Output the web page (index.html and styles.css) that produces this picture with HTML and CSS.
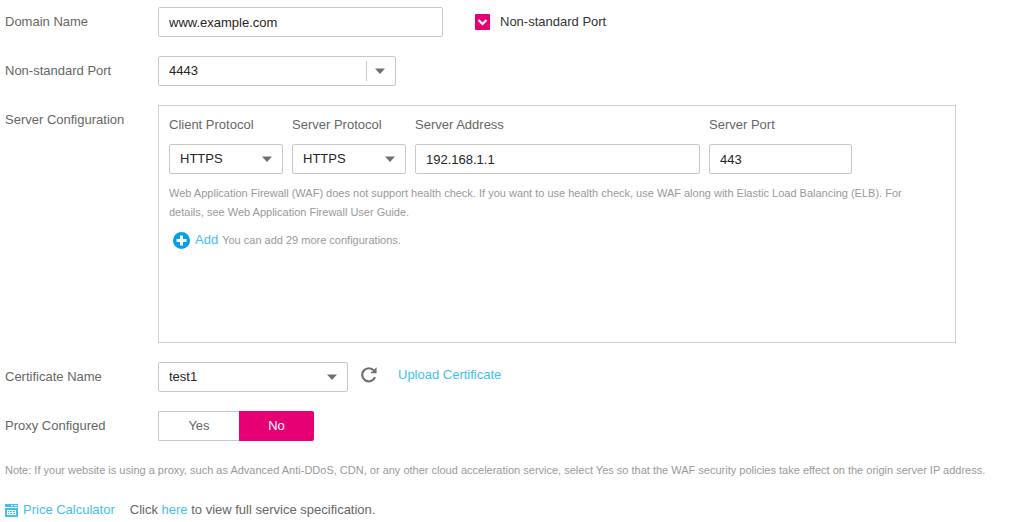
FILE: index.html
```html
<!DOCTYPE html>
<html lang="en">
<head>
<meta charset="utf-8">
<meta name="viewport" content="width=device-width, initial-scale=1">
<title>Domain Configuration</title>
<link rel="stylesheet" href="styles.css">
</head>
<body>
<form class="form">
  <div class="row">
    <label class="label" for="domain">Domain Name</label>
    <div class="content">
      <input class="control control-long" id="domain" type="text" value="www.example.com">
      <label class="check-label"><input class="checkbox" type="checkbox" checked>Non-standard Port</label>
    </div>
  </div>

  <div class="row">
    <label class="label" for="port">Non-standard Port</label>
    <div class="content">
      <span class="select select-port">
        <select class="control" id="port"><option>4443</option></select>
        <svg class="arrow" viewBox="0 0 10 6" aria-hidden="true"><path d="M0 0.5h10L5 6z"/></svg>
      </span>
    </div>
  </div>

  <div class="row">
    <span class="label">Server Configuration</span>
    <section class="panel">
      <div class="server">
        <div class="field">
          <label for="client-protocol">Client Protocol</label>
          <span class="select">
            <select class="control" id="client-protocol"><option>HTTPS</option></select>
            <svg class="arrow" viewBox="0 0 10 6" aria-hidden="true"><path d="M0 0.5h10L5 6z"/></svg>
          </span>
        </div>
        <div class="field">
          <label for="server-protocol">Server Protocol</label>
          <span class="select">
            <select class="control" id="server-protocol"><option>HTTPS</option></select>
            <svg class="arrow" viewBox="0 0 10 6" aria-hidden="true"><path d="M0 0.5h10L5 6z"/></svg>
          </span>
        </div>
        <div class="field">
          <label for="address">Server Address</label>
          <input class="control" id="address" type="text" value="192.168.1.1">
        </div>
        <div class="field">
          <label for="server-port">Server Port</label>
          <input class="control" id="server-port" type="text" value="443">
        </div>
      </div>
      <p class="hint">Web Application Firewall (WAF) does not support health check. If you want to use health check, use WAF along with Elastic Load Balancing (ELB). For details, see Web Application Firewall User Guide.</p>
      <div class="add-row">
        <button class="add" type="button">
          <svg class="add-icon" viewBox="0 0 17 17" aria-hidden="true"><circle cx="8.5" cy="8.5" r="8.5" fill="#049fe8"/><path d="M8.5 3.5v10M3.5 8.5h10" stroke="#fff" stroke-width="3"/></svg>
          Add
        </button>
        <span class="small">You can add 29 more configurations.</span>
      </div>
    </section>
  </div>

  <div class="row">
    <label class="label" for="certificate">Certificate Name</label>
    <div class="content">
      <span class="select select-cert">
        <select class="control" id="certificate"><option>test1</option></select>
        <svg class="arrow" viewBox="0 0 10 6" aria-hidden="true"><path d="M0 0.5h10L5 6z"/></svg>
      </span>
      <div class="cert-actions">
        <button class="refresh" type="button" aria-label="Refresh">
          <svg class="refresh-icon" viewBox="0 0 16 16" aria-hidden="true"><path d="M12.9 3.6A6.6 6.6 0 1 0 14 10.2" fill="none" stroke="#707070" stroke-width="2.2"/><path d="M15.6 0.3v6H10V4.8h1.6L13.7 2z" fill="#707070"/></svg>
        </button>
        <a class="link" href="#">Upload Certificate</a>
      </div>
    </div>
  </div>

  <div class="row">
    <span class="label" id="proxy-label">Proxy Configured</span>
    <div class="toggle" role="group" aria-labelledby="proxy-label">
      <button class="option" type="button" aria-pressed="false">Yes</button>
      <button class="option option-active" type="button" aria-pressed="true">No</button>
    </div>
  </div>

  <p class="small note">Note: If your website is using a proxy, such as Advanced Anti-DDoS, CDN, or any other cloud acceleration service, select Yes so that the WAF security policies take effect on the origin server IP address.</p>

  <footer class="footer">
    <a class="link calculator" href="#">
      <svg class="calc-icon" viewBox="0 0 13 13" aria-hidden="true"><path fill="#42c0f0" d="M0 0h13v13H0z"/><path fill="#fff" d="M6 1h2v1H6zM9 1h3v1H9zM0 3h13v1H0zM2 6h9v5H2z"/><path fill="#42c0f0" d="M3 7h1v1H3zM5 7h2v1H5zM8 7h2v1H8zM3 9h1v1H3zM5 9h2v1H5zM8 9h2v1H8z"/></svg>
      Price Calculator
    </a>
    <span>Click <a class="link" href="#">here</a> to view full service specification.</span>
  </footer>
</form>
</body>
</html>
```
FILE: styles.css
```css
* {
  box-sizing: border-box;
}

body {
  margin: 0;
  background: #fff;
  color: #666;
  font: 13px/20px "Liberation Sans", Arial, sans-serif;
}

button,
input,
select {
  font: inherit;
  color: inherit;
}

p {
  margin: 0;
}

.form {
  display: flex;
  flex-direction: column;
  gap: 19px;
  padding: 7px 0 0 5px;
}

.row {
  display: grid;
  grid-template-columns: 153px minmax(0, 798px);
}

.label {
  line-height: 30px;
}

.content {
  display: flex;
  align-items: center;
}

.control {
  width: 100%;
  height: 30px;
  margin: 0;
  padding: 0 10px;
  border: 1px solid #c8c8c8;
  border-radius: 2px;
  background: #fff;
  color: #252525;
  appearance: none;
}

.control-long {
  max-width: 285px;
}

.check-label {
  display: flex;
  align-items: center;
  gap: 10px;
  margin-left: 32px;
  color: #333;
}

.checkbox {
  width: 15px;
  height: 16px;
  margin: 0;
  border: 1px solid #c8c8c8;
  border-radius: 1px;
  appearance: none;
}

.checkbox:checked {
  border: 0;
  background: #e60073 url("data:image/svg+xml,%3Csvg xmlns='http://www.w3.org/2000/svg' viewBox='0 0 15 16'%3E%3Cpath d='M3.5 6l4 4 4-4' fill='none' stroke='white' stroke-width='2.2'/%3E%3C/svg%3E") center / 15px 16px;
}

.select {
  position: relative;
  display: block;
}

.select-port {
  width: 238px;
}

.select-port::after {
  content: "";
  position: absolute;
  top: 5px;
  right: 29px;
  width: 1px;
  height: 20px;
  background: #c8c8c8;
}

.select-cert {
  width: 190px;
}

.arrow {
  position: absolute;
  top: 12px;
  right: 11px;
  width: 10px;
  height: 6px;
  fill: #707070;
  pointer-events: none;
}

.panel {
  min-height: 238px;
  padding: 9px 10px;
  border: 1px solid #d0d0d0;
}

.server {
  display: grid;
  grid-template-columns: minmax(0, 114px) minmax(0, 114px) minmax(0, 285px) minmax(0, 143px);
  gap: 9px;
}

.field {
  display: flex;
  flex-direction: column;
  gap: 9px;
}

.small,
.hint {
  color: #999;
  font-size: 11px;
}

.hint {
  margin-top: 10px;
  padding-right: 16px;
  line-height: 19px;
}

.add-row {
  display: flex;
  align-items: center;
  gap: 4px;
  margin-top: 8px;
  padding-left: 4px;
}

.add {
  display: flex;
  align-items: center;
  gap: 5px;
  padding: 0;
  border: 0;
  background: none;
  color: #42c0f0;
  cursor: pointer;
}

.add-icon {
  width: 17px;
  height: 17px;
}

.cert-actions {
  display: flex;
  align-items: center;
  gap: 21px;
  margin-left: 13px;
  padding-bottom: 4px;
}

.refresh {
  display: flex;
  padding: 0;
  border: 0;
  background: none;
  cursor: pointer;
}

.refresh-icon {
  width: 16px;
  height: 16px;
}

.link {
  color: #42c0f0;
  text-decoration: none;
}

.toggle {
  display: flex;
}

.option {
  width: 81px;
  height: 30px;
  padding: 0;
  border: 1px solid #c8c8c8;
  border-right: 0;
  border-radius: 2px 0 0 2px;
  background: #fff;
}

.option-active {
  width: 75px;
  border: 0;
  border-radius: 0 2px 2px 0;
  background: #e60073;
  color: #fff;
}

.footer {
  display: flex;
  gap: 15px;
  line-height: 22px;
}

.calculator {
  display: flex;
  align-items: center;
  gap: 5px;
}

.calc-icon {
  width: 13px;
  height: 13px;
}
```
